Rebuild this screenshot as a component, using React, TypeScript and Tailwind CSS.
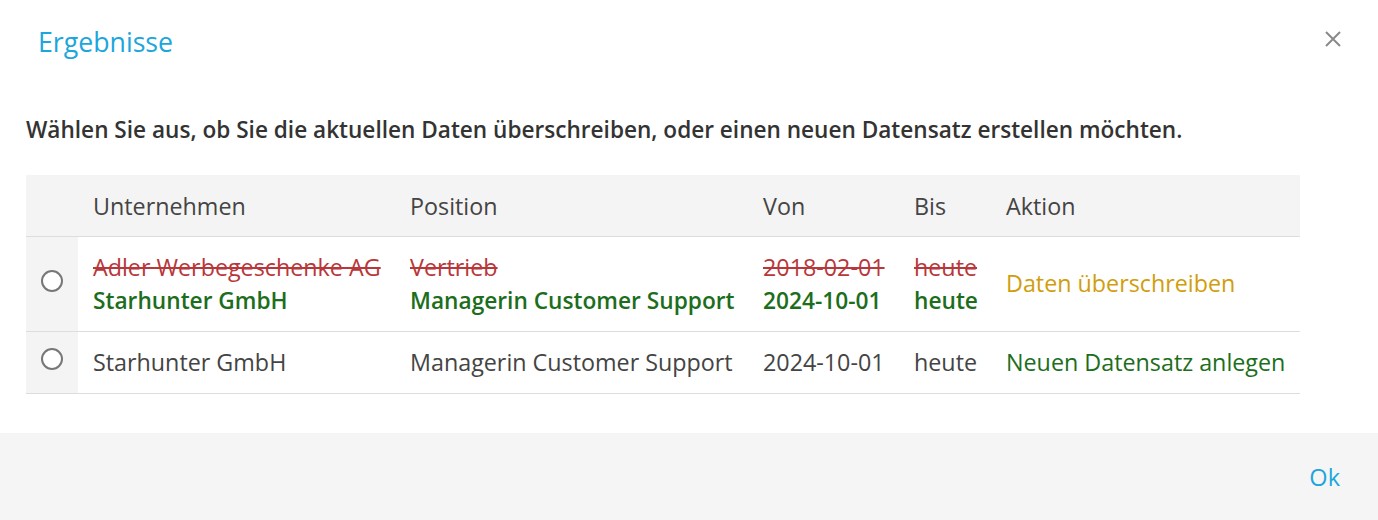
import React from 'react';

type Row = {
  old?: { company: string; position: string; from: string; to: string };
  company: string;
  position: string;
  from: string;
  to: string;
  action: string;
  actionClass: string;
};

const rows: Row[] = [
  {
    old: { company: 'Adler Werbegeschenke AG', position: 'Vertrieb', from: '2018-02-01', to: 'heute' },
    company: 'Starhunter GmbH',
    position: 'Managerin Customer Support',
    from: '2024-10-01',
    to: 'heute',
    action: 'Daten überschreiben',
    actionClass: 'text-[#d19d0c]',
  },
  {
    company: 'Starhunter GmbH',
    position: 'Managerin Customer Support',
    from: '2024-10-01',
    to: 'heute',
    action: 'Neuen Datensatz anlegen',
    actionClass: 'text-[#1c6e1c]',
  },
];

function Cell({ row, field }: { row: Row; field: 'company' | 'position' | 'from' | 'to' }) {
  if (!row.old) {
    return <span>{row[field]}</span>;
  }
  return (
    <div className="flex flex-col leading-[33px]">
      <span className="text-[#b8373b] line-through decoration-[2px]">{row.old[field]}</span>
      <span className="font-semibold text-[22.7px] text-[#1c6e1c]">{row[field]}</span>
    </div>
  );
}

export default function App() {
  return (
    <div className="w-[1378px] h-[520px] bg-white flex flex-col text-[#444] font-['Open_Sans',sans-serif]">
      <div className="flex items-start justify-between pl-[38px] pr-[36px] pt-[24px]">
        <h2 className="text-[26.7px] leading-[36px] text-[#1ca6dc]">Ergebnisse</h2>
        <button className="text-[#8a8a8a] mt-[6px]">
          <svg width="18" height="18" viewBox="0 0 18 18" stroke="currentColor" strokeWidth="2">
            <path d="M2 2 L16 16 M16 2 L2 16" />
          </svg>
        </button>
      </div>

      <div className="px-[26px] pt-[55px] flex-1">
        <p className="text-[22.6px] leading-[30px] font-semibold text-[#333] whitespace-nowrap">
          Wählen Sie aus, ob Sie die aktuellen Daten überschreiben, oder einen neuen Datensatz erstellen möchten.
        </p>

        <table className="mt-[30px] w-[1274px] table-fixed border-collapse text-[23.3px]">
          <colgroup>
            <col className="w-[52px]" />
            <col className="w-[317px]" />
            <col className="w-[353px]" />
            <col className="w-[151px]" />
            <col className="w-[92px]" />
            <col className="w-[309px]" />
          </colgroup>
          <thead>
            <tr className="bg-[#f4f4f4] h-[61px] border-b border-[#dddddd]">
              <th></th>
              <th className="text-left font-normal px-[15px] pt-[2px]">Unternehmen</th>
              <th className="text-left font-normal px-[15px] pt-[2px]">Position</th>
              <th className="text-left font-normal px-[15px] pt-[2px]">Von</th>
              <th className="text-left font-normal px-[15px] pt-[2px]">Bis</th>
              <th className="text-left font-normal px-[15px] pt-[2px]">Aktion</th>
            </tr>
          </thead>
          <tbody>
            {rows.map((row, i) => (
              <tr key={i} className={`border-b border-[#dddddd] ${row.old ? 'h-[95px]' : 'h-[62px]'}`}>
                <td className="bg-[#f4f4f4] align-middle">
                  <div className={`flex justify-center ${row.old ? '-mt-[5px]' : '-mt-[7px]'}`}>
                    <span className="w-[22px] h-[22px] rounded-full border-[2px] border-[#777] bg-white" />
                  </div>
                </td>
                <td className="px-[15px] whitespace-nowrap"><Cell row={row} field="company" /></td>
                <td className="px-[15px] whitespace-nowrap"><Cell row={row} field="position" /></td>
                <td className="px-[15px] whitespace-nowrap"><Cell row={row} field="from" /></td>
                <td className="px-[15px] whitespace-nowrap"><Cell row={row} field="to" /></td>
                <td className={`px-[15px] whitespace-nowrap ${row.actionClass}`}>{row.action}</td>
              </tr>
            ))}
          </tbody>
        </table>
      </div>

      <div className="h-[87px] bg-[#f5f5f5] flex items-center justify-end pr-[38px]">
        <button className="text-[23.5px] text-[#1ca6dc] mt-[2px]">Ok</button>
      </div>
    </div>
  );
}
